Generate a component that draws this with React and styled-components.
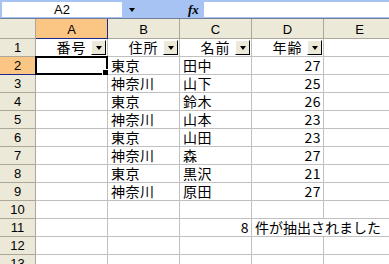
import React from 'react';
import styled, { createGlobalStyle } from 'styled-components';

const GlobalStyle = createGlobalStyle`
    html, body {
        margin: 0;
        padding: 0;
        background: #ffffff;
        overflow: hidden;
    }
    body {
        font-family: "Noto Sans CJK JP", "Liberation Sans", sans-serif;
    }
`;

const Sheet = styled.div`
    width: 389px;
    height: 264px;
    overflow: hidden;
    background: #ffffff;
`;

const FormulaBar = styled.div`
    display: flex;
    align-items: center;
    height: 19px;
    padding: 2px 0 1px 2px;
    box-sizing: border-box;
    background: #a7c3f3;
    border-bottom: 1px solid #6f7f99;
`;

const NameBox = styled.div`
    width: 120px;
    height: 15px;
    background: #ffffff;
    font-family: "Liberation Sans", sans-serif;
    font-size: 13px;
    line-height: 15px;
    text-align: center;
    color: #000;
`;

const DropArrow = styled.div`
    width: 0;
    height: 0;
    margin-left: 7px;
    border-left: 3.5px solid transparent;
    border-right: 3.5px solid transparent;
    border-top: 4px solid #000;
`;

const Fx = styled.div`
    margin-left: 53px;
    width: 16px;
    font-family: "Liberation Serif", serif;
    font-style: italic;
    font-weight: bold;
    font-size: 13px;
    line-height: 15px;
    color: #000;
`;

const FormulaInput = styled.div`
    flex: 1;
    height: 15px;
    background: #ffffff;
`;

const Grid = styled.div`
    display: grid;
    grid-template-columns: 36px repeat(5, 72px);
    grid-template-rows: 20px;
    grid-auto-rows: 18px;
`;

const Corner = styled.div`
    background: #ece9d8;
    border-right: 1px solid #aca899;
    border-bottom: 1px solid #aca899;
    box-sizing: border-box;
`;

const ColHead = styled.div`
    display: flex;
    align-items: center;
    justify-content: center;
    background: ${p => (p.$active ? '#fbc584' : '#ece9d8')};
    border-right: 1px solid ${p => (p.$active ? '#1b2a8a' : '#aca899')};
    border-bottom: 1px solid ${p => (p.$active ? '#1b2a8a' : '#aca899')};
    box-sizing: border-box;
    font-family: "Liberation Sans", sans-serif;
    font-size: 13px;
    color: #000;
    padding-top: 1px;
`;

const RowHead = styled.div`
    display: flex;
    align-items: center;
    justify-content: center;
    background: ${p => (p.$active ? '#fbc584' : '#ece9d8')};
    border-right: 1px solid #aca899;
    border-bottom: 1px solid ${p => (p.$active ? '#1b2a8a' : '#aca899')};
    box-sizing: border-box;
    font-family: "Liberation Sans", sans-serif;
    font-size: 13px;
    line-height: 15px;
    color: #000;
`;

const Cell = styled.div`
    position: relative;
    display: flex;
    align-items: flex-end;
    justify-content: ${p => p.$align || 'flex-start'};
    padding: 0 2px 1px 3px;
    border-right: ${p => (p.$spill ? 'none' : '1px solid #c0c0c0')};
    border-bottom: 1px solid #c0c0c0;
    box-sizing: border-box;
    font-size: 14px;
    line-height: 15px;
    letter-spacing: ${p => (p.$spill ? '0' : '0.5px')};
    color: #000;
    white-space: nowrap;
    overflow: visible;
    z-index: ${p => (p.$spill ? 1 : 0)};
`;

const HeadCell = styled(Cell)`
    justify-content: center;
    padding-left: 0;
    padding-right: 0;
    letter-spacing: 1px;
`;

const FilterButton = styled.div`
    position: absolute;
    right: 1px;
    top: 1px;
    width: 15px;
    height: 15px;
    box-sizing: border-box;
    background: #ece9d8;
    border-top: 1px solid #ffffff;
    border-left: 1px solid #ffffff;
    border-right: 1px solid #000000;
    border-bottom: 1px solid #000000;
    display: flex;
    align-items: center;
    justify-content: center;

    &::after {
        content: '';
        width: 0;
        height: 0;
        border-left: 3.5px solid transparent;
        border-right: 3.5px solid transparent;
        border-top: 4px solid #000;
    }
`;

const ActiveFrame = styled.div`
    position: absolute;
    left: -1px;
    top: -1px;
    right: -1px;
    bottom: -1px;
    border: 2px solid #000;
    pointer-events: none;
`;

const FillHandle = styled.div`
    position: absolute;
    right: -3px;
    bottom: -3px;
    width: 5px;
    height: 5px;
    background: #000;
    border: 1px solid #fff;
    box-sizing: content-box;
`;

const columns = ['A', 'B', 'C', 'D', 'E'];
const headers = ['番号', '住所', '名前', '年齢'];

const people = [
    ['東京', '田中', 27],
    ['神奈川', '山下', 25],
    ['東京', '鈴木', 26],
    ['神奈川', '山本', 23],
    ['東京', '山田', 23],
    ['神奈川', '森', 27],
    ['東京', '黒沢', 21],
    ['神奈川', '原田', 27],
];

class App extends React.Component {

    renderRow(n) {
        if (n === 1) {
            return [
                <RowHead key="h">1</RowHead>,
                ...headers.map(h => (
                    <HeadCell key={h}>
                        {h}
                        <FilterButton />
                    </HeadCell>
                )),
                <Cell key="e" />,
            ];
        }
        if (n >= 2 && n <= 9) {
            const [addr, name, age] = people[n - 2];
            return [
                <RowHead key="h" $active={n === 2}>{n}</RowHead>,
                <Cell key="a">
                    {n === 2 && (
                        <ActiveFrame>
                            <FillHandle />
                        </ActiveFrame>
                    )}
                </Cell>,
                <Cell key="b">{addr}</Cell>,
                <Cell key="c">{name}</Cell>,
                <Cell key="d" $align="flex-end">{age}</Cell>,
                <Cell key="e" />,
            ];
        }
        if (n === 11) {
            return [
                <RowHead key="h">11</RowHead>,
                <Cell key="a" />,
                <Cell key="b" />,
                <Cell key="c" $align="flex-end">8</Cell>,
                <Cell key="d" $spill>件が抽出されました</Cell>,
                <Cell key="e" />,
            ];
        }
        return [
            <RowHead key="h">{n}</RowHead>,
            ...columns.map(c => <Cell key={c} />),
        ];
    }

    render() {
        const rows = [1, 2, 3, 4, 5, 6, 7, 8, 9, 10, 11, 12, 13];
        return (
            <Sheet>
                <GlobalStyle />
                <FormulaBar>
                    <NameBox>A2</NameBox>
                    <DropArrow />
                    <Fx>fx</Fx>
                    <FormulaInput />
                </FormulaBar>
                <Grid>
                    <Corner />
                    {columns.map(c => (
                        <ColHead key={c} $active={c === 'A'}>{c}</ColHead>
                    ))}
                    {rows.map(n => (
                        <React.Fragment key={n}>{this.renderRow(n)}</React.Fragment>
                    ))}
                </Grid>
            </Sheet>
        );
    }
}

export default App;
